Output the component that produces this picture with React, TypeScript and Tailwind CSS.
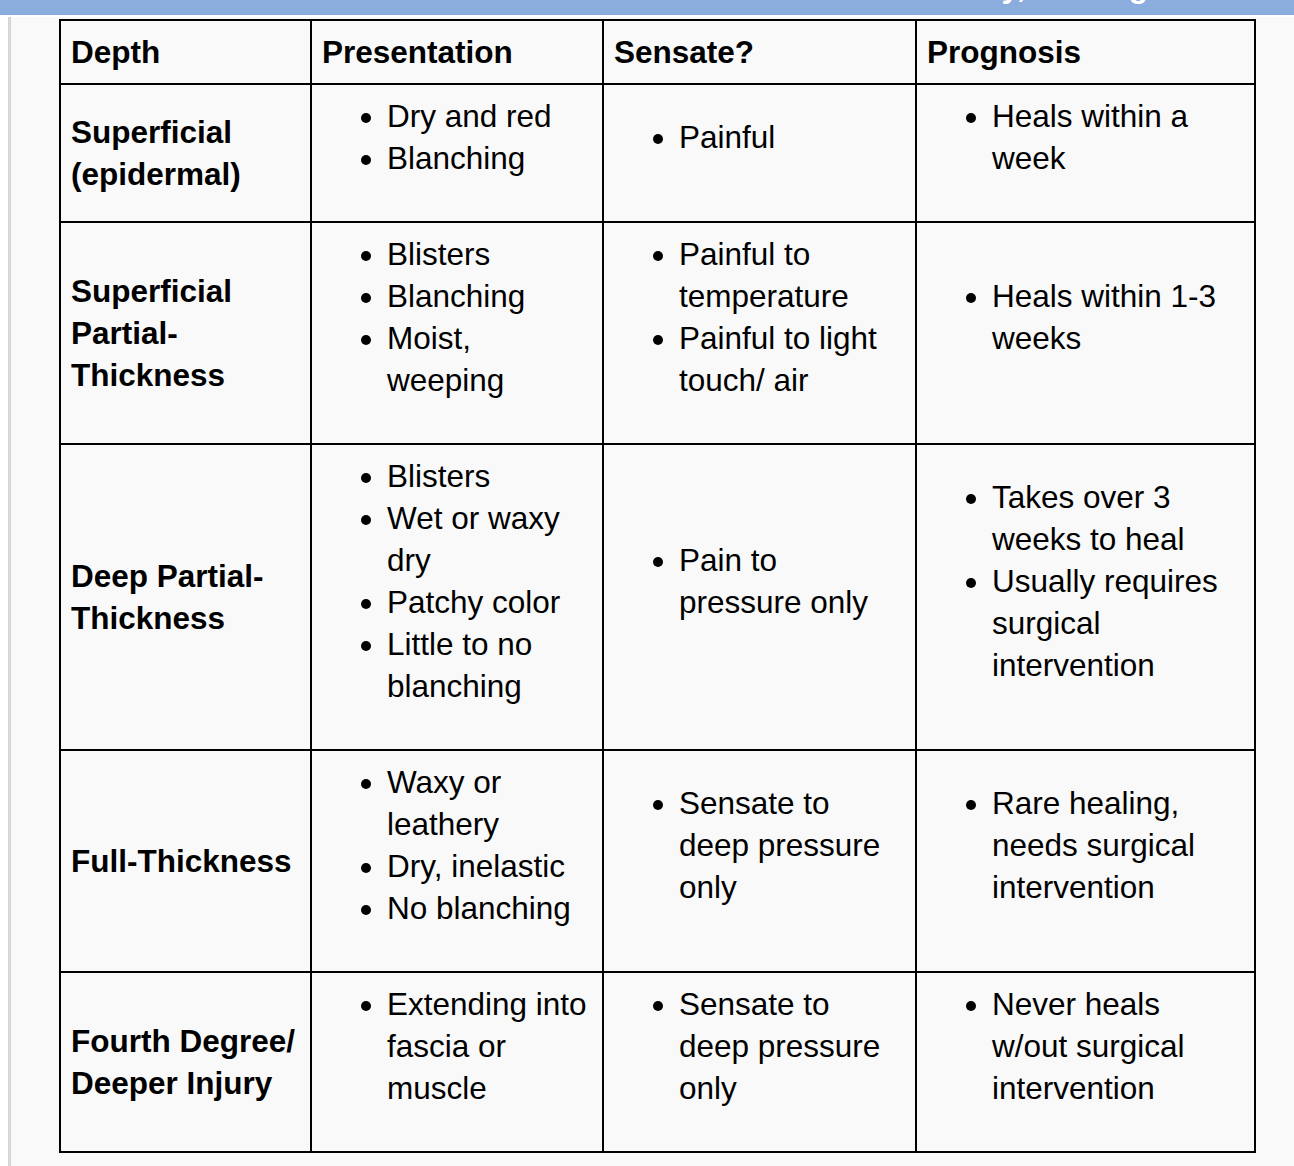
import React from "react";

type Row = { depth: string; pres: string[]; sens: string[]; prog: string[] };

const rows: Row[] = [
  { depth: "Superficial (epidermal)", pres: ["Dry and red", "Blanching"], sens: ["Painful"], prog: ["Heals within a week"] },
  { depth: "Superficial Partial-Thickness", pres: ["Blisters", "Blanching", "Moist, weeping"], sens: ["Painful to temperature", "Painful to light touch/ air"], prog: ["Heals within 1-3 weeks"] },
  { depth: "Deep Partial-Thickness", pres: ["Blisters", "Wet or waxy dry", "Patchy color", "Little to no blanching"], sens: ["Pain to pressure only"], prog: ["Takes over 3 weeks to heal", "Usually requires surgical intervention"] },
  { depth: "Full-Thickness", pres: ["Waxy or leathery", "Dry, inelastic", "No blanching"], sens: ["Sensate to deep pressure only"], prog: ["Rare healing, needs surgical intervention"] },
  { depth: "Fourth Degree/ Deeper Injury", pres: ["Extending into fascia or muscle"], sens: ["Sensate to deep pressure only"], prog: ["Never heals w/out surgical intervention"] },
];

function List({ items }: { items: string[] }) {
  return (
    <ul className="list-disc pl-[65px] mb-[32px]">
      {items.map((t, i) => (
        <li key={i}>{t}</li>
      ))}
    </ul>
  );
}

export default function App() {
  return (
    <div
      className="min-h-[1166px] bg-white text-black"
      style={{ fontFamily: '"Liberation Sans", Arial, Helvetica, sans-serif' }}
    >
      <div className="h-[15px] bg-[#8badde] overflow-hidden flex justify-end pr-[146px]">
        <span className="text-white font-bold text-[31.5px] leading-[42px] -mt-[35px] whitespace-nowrap">
          Classification of Burn Severity, Healing
        </span>
      </div>
      <div className="flex pt-[2px]">
        <div className="w-[8px] shrink-0" />
        <div className="w-[3px] shrink-0 bg-[#d7d7d7]" />
        <div className="flex-1 bg-[#f9f9f9] pl-[48px] pt-[2px] pb-[14px]">
          <table className="table-fixed border-collapse border-2 border-black w-[1197px] text-[31.5px] leading-[42px]">
            <colgroup>
              <col className="w-[251px]" />
              <col className="w-[292px]" />
              <col className="w-[313px]" />
              <col className="w-[339px]" />
            </colgroup>
            <thead>
              <tr>
                {["Depth", "Presentation", "Sensate?", "Prognosis"].map((h) => (
                  <th key={h} className="border-2 border-black px-[10px] py-[10px] text-left font-bold align-middle">
                    {h}
                  </th>
                ))}
              </tr>
            </thead>
            <tbody>
              {rows.map((r, i) => (
                <tr key={i}>
                  <td className="border-2 border-black px-[10px] py-[10px] font-bold align-middle">{r.depth}</td>
                  <td className="border-2 border-black px-[10px] py-[10px] align-middle">
                    <List items={r.pres} />
                  </td>
                  <td className="border-2 border-black px-[10px] py-[10px] align-middle">
                    <List items={r.sens} />
                  </td>
                  <td className="border-2 border-black px-[10px] py-[10px] align-middle">
                    <List items={r.prog} />
                  </td>
                </tr>
              ))}
            </tbody>
          </table>
        </div>
      </div>
    </div>
  );
}
